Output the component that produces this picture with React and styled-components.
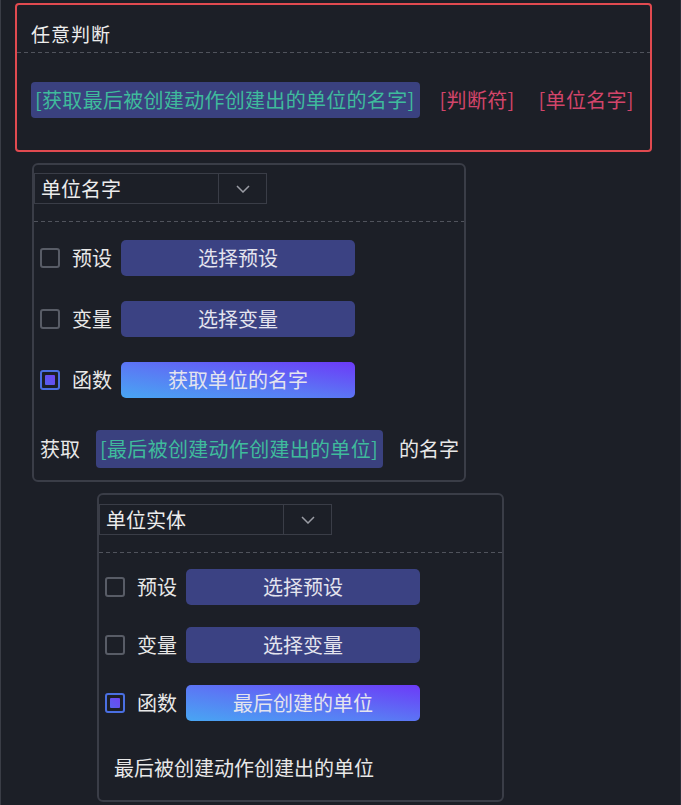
import React from "react";
import styled, { createGlobalStyle, css } from "styled-components";

const Global = createGlobalStyle`
  html, body { margin: 0; padding: 0; background: #1c1f27; }
  body { font-family: "Noto Sans CJK SC", "Noto Sans", sans-serif; color: #e4e4e4; }
  * { box-sizing: border-box; }
`;

const Page = styled.div`
  width: 681px;
  min-height: 805px;
  background: #1c1f27;
  border-left: 1px solid #3a3d46;
  border-right: 1px solid #2c2f38;
  padding: 3px 0 0 0;
  display: flex;
  flex-direction: column;
  gap: 11px;
`;

const Dashed = styled.div`
  height: 1px;
  background-image: repeating-linear-gradient(
    to right,
    #50535c 0 4px,
    transparent 4px 7px
  );
`;

const Card = styled.div`
  margin-left: ${(p) => p.$left}px;
  width: ${(p) => p.$width}px;
  border: 2px solid ${(p) => (p.$accent ? "#e14a50" : "#3a3d47")};
  border-radius: ${(p) => (p.$accent ? 4 : 6)}px;
  display: flex;
  flex-direction: column;
`;

const Title = styled.div`
  font-size: 19px;
  line-height: 22px;
  padding: 18px 0 7px 14px;
  color: #ececec;
  letter-spacing: 1px;
`;

const ExprRow = styled.div`
  display: flex;
  align-items: center;
  padding: 29px 0 32px 14px;
  font-size: 20px;
  line-height: 36px;
  letter-spacing: 0.3px;
`;

const Chip = styled.div`
  background: #3a417f;
  color: #3fbb9c;
  border-radius: 4px;
  height: ${(p) => p.$h || 36}px;
  line-height: ${(p) => p.$h || 36}px;
  padding: 0 5px 0 4px;
  font-size: 20px;
  letter-spacing: 0.3px;
  white-space: nowrap;
`;

const Token = styled.span`
  color: #d2456a;
  margin-left: ${(p) => p.$gap}px;
  white-space: nowrap;
`;

const Header = styled.div`
  padding-top: ${(p) => p.$top}px;
  display: flex;
  flex-direction: column;
  gap: 17px;
`;

const Select = styled.div`
  width: 233px;
  height: 31px;
  border: 1px solid #3a3d47;
  display: flex;
  align-items: stretch;
`;

const SelectValue = styled.div`
  flex: 1;
  padding-left: 6px;
  font-size: 20px;
  line-height: 29px;
  color: #ececec;
`;

const SelectArrow = styled.div`
  width: 48px;
  border-left: 1px solid #3a3d47;
  display: flex;
  align-items: center;
  justify-content: center;
`;

const Body = styled.div`
  display: flex;
  flex-direction: column;
  gap: ${(p) => p.$gap}px;
  padding: ${(p) => p.$top}px 0 ${(p) => p.$bottom}px 6px;
`;

const OptionRow = styled.div`
  display: flex;
  align-items: center;
  height: 36px;
`;

const Check = styled.div`
  width: 20px;
  height: 20px;
  border-radius: 3px;
  border: 2px solid #585c66;
  padding: 3px;
  ${(p) =>
    p.$checked &&
    css`
      border-color: #4a6fe2;
      &::after {
        content: "";
        display: block;
        width: 100%;
        height: 100%;
        border-radius: 1px;
        background: linear-gradient(45deg, #5660ee, #6f45f2);
      }
    `}
`;

const Label = styled.span`
  font-size: 20px;
  line-height: 36px;
  margin-left: 12px;
  width: 40px;
  color: #e8e8e8;
`;

const Button = styled.div`
  margin-left: 9px;
  width: 234px;
  height: 36px;
  border-radius: 5px;
  background: ${(p) =>
    p.$active
      ? "linear-gradient(to top right, #48a6f3 0%, #5a7af4 45%, #6c3af8 100%)"
      : "#3b4283"};
  color: #e4e4ee;
  font-size: 20px;
  line-height: 36px;
  text-align: center;
`;

const GetRow = styled.div`
  display: flex;
  align-items: center;
  gap: 16px;
  margin-top: 7px;
  font-size: 20px;
  line-height: 38px;
`;

const Plain = styled.span`
  color: #e8e8e8;
  white-space: nowrap;
`;

const Note = styled.div`
  margin-top: 13px;
  padding-left: 9px;
  font-size: 20px;
  line-height: 24px;
  color: #e8e8e8;
`;

const Chevron = () => (
  <svg width="14" height="8" viewBox="0 0 14 8" fill="none">
    <path d="M1 1l6 6 6-6" stroke="#9a9ca4" strokeWidth="1.5" />
  </svg>
);

const options = (fnText) => [
  { label: "预设", text: "选择预设" },
  { label: "变量", text: "选择变量" },
  { label: "函数", text: fnText, checked: true },
];

const Options = ({ fnText }) =>
  options(fnText).map((o) => (
    <OptionRow key={o.label}>
      <Check $checked={o.checked} />
      <Label>{o.label}</Label>
      <Button $active={o.checked}>{o.text}</Button>
    </OptionRow>
  ));

export default function App() {
  return (
    <>
      <Global />
      <Page>
        <Card $accent $left={14} $width={637}>
          <Title>任意判断</Title>
          <Dashed />
          <ExprRow>
            <Chip>[获取最后被创建动作创建出的单位的名字]</Chip>
            <Token $gap={20}>[判断符]</Token>
            <Token $gap={24}>[单位名字]</Token>
          </ExprRow>
        </Card>

        <Card $left={31} $width={434}>
          <Header $top={8}>
            <Select>
              <SelectValue>单位名字</SelectValue>
              <SelectArrow>
                <Chevron />
              </SelectArrow>
            </Select>
            <Dashed />
          </Header>
          <Body $top={18} $gap={25} $bottom={12}>
            <Options fnText="获取单位的名字" />
            <GetRow>
              <Plain>获取</Plain>
              <Chip $h={38}>[最后被创建动作创建出的单位]</Chip>
              <Plain>的名字</Plain>
            </GetRow>
          </Body>
        </Card>

        <Card $left={96} $width={407}>
          <Header $top={9}>
            <Select>
              <SelectValue>单位实体</SelectValue>
              <SelectArrow>
                <Chevron />
              </SelectArrow>
            </Select>
            <Dashed />
          </Header>
          <Body $top={16} $gap={22} $bottom={20}>
            <Options fnText="最后创建的单位" />
            <Note>最后被创建动作创建出的单位</Note>
          </Body>
        </Card>
      </Page>
    </>
  );
}
